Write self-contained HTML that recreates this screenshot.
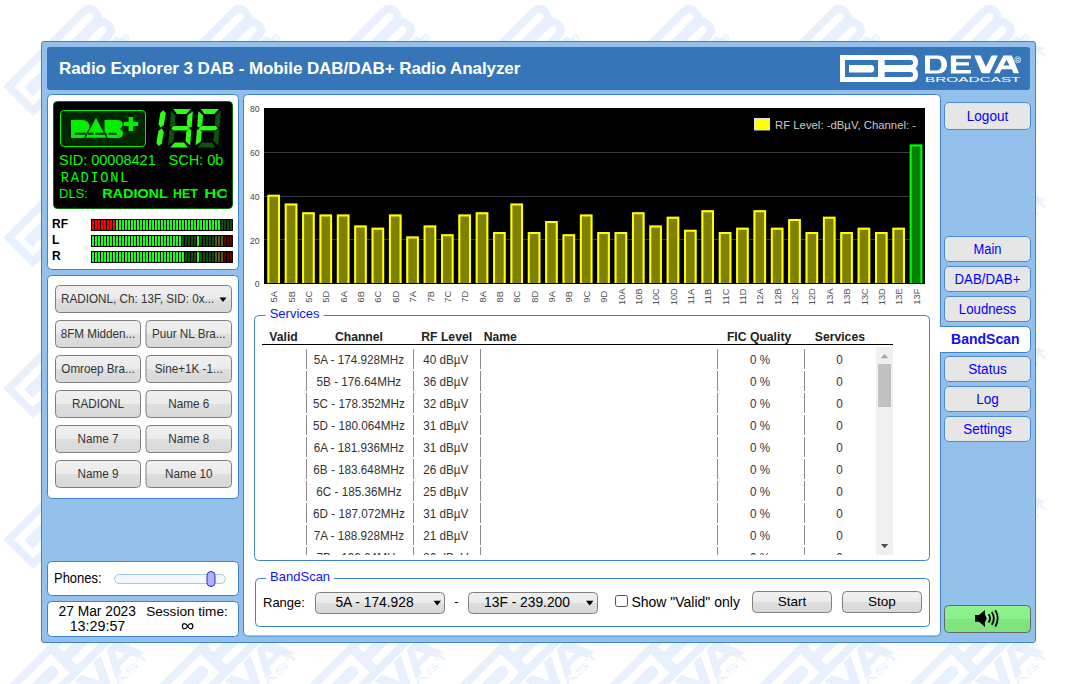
<!DOCTYPE html>
<html><head><meta charset="utf-8"><title>Radio Explorer 3 DAB</title>
<style>html,body{margin:0;padding:0;background:#fff;overflow:hidden} body{width:1077px;height:684px}</style>
</head><body>
<svg width="1077" height="684" viewBox="0 0 1077 684" style="display:block">
<defs>
<linearGradient id="gbtn" x1="0" y1="0" x2="0" y2="1">
<stop offset="0" stop-color="#f0f0f0"/><stop offset="0.5" stop-color="#ebebeb"/><stop offset="0.5" stop-color="#dedede"/><stop offset="1" stop-color="#d8d8d8"/></linearGradient>
<linearGradient id="ggreen" x1="0" y1="0" x2="0" y2="1">
<stop offset="0" stop-color="#8ef28e"/><stop offset="0.5" stop-color="#8bf08b"/><stop offset="0.5" stop-color="#80e680"/><stop offset="1" stop-color="#7ee27e"/></linearGradient>
</defs>
<rect x="0" y="0" width="1077" height="684" rx="0" fill="#ffffff" />
<defs><pattern id="wm" patternUnits="userSpaceOnUse" x="0" y="0" width="150" height="151"><g transform="translate(3.3,86.5) rotate(-45) scale(1.56) translate(-840,-55)"><path fill-rule="evenodd" fill="#e8f0fe" d="M840,55 H911 C916,55 918,58.5 918,62 C918,65 917,67.5 915.5,68.5 C917,69.5 918,72 918,75 C918,78.5 916,82 911,82 H840 Z M845,60 V77 H878 V60 Z M884.7,60 V65 H910 C912.5,65 913.2,63.8 913.2,62.5 C913.2,61.2 912.5,60 910,60 Z M884.7,71.9 V76.9 H910 C912.5,76.9 913.2,75.7 913.2,74.4 C913.2,73.1 912.5,71.9 910,71.9 Z"/><path fill="#e8f0fe" d="M849,64.9 H871 C873.5,64.9 874.2,66.8 874.2,68.75 C874.2,70.7 873.5,72.6 871,72.6 H849 Z"/></g><g transform="translate(119,51) rotate(-45) scale(1.56) translate(-1006.5,-63.7)"><g fill="#e8f0fe"><path d="M950.9,55.5 H971 V58.7 H956.2 V62.3 H969 V65.6 H956.2 V70.1 H971 V73.4 H950.9 Z"/><path d="M974.2,55.6 H980.6 L985.9,67 L991.7,55.6 H997.9 L989.5,73.2 H981.7 Z"/><path fill-rule="evenodd" d="M994,73.2 L1003.4,55.6 H1011.8 L1019,73.2 H1013.5 L1011.9,69.3 H1001.5 L999.5,73.2 Z M1003.4,65.6 L1006.5,59.8 L1009.6,65.6 Z"/></g><circle cx="1015.4000000000001" cy="60.900000000000006" r="2" fill="none" stroke="#e8f0fe" stroke-width="0.7"/><text x="1015.4000000000001" y="62.800000000000004" font-family="'Liberation Sans'" font-size="5" fill="#e8f0fe" text-anchor="middle">R</text><text x="925" y="78.0" font-family="'Liberation Sans'" font-size="6.3" fill="#e8f0fe" textLength="95.5" lengthAdjust="spacingAndGlyphs">BROADCAST</text></g></pattern></defs>
<rect x="0" y="0" width="1050" height="684" rx="0" fill="url(#wm)" />
<rect x="41.5" y="41.5" width="994" height="601" rx="2.5" fill="#93c1ec" stroke="#3d84cb" stroke-width="1" />
<rect x="47" y="47" width="983" height="43" rx="3" fill="#3676b8" />
<text x="59" y="74" font-family="'Liberation Sans', sans-serif" font-size="17" font-weight="bold" fill="#fff" text-anchor="start" letter-spacing="-0.08">Radio Explorer 3 DAB - Mobile DAB/DAB+ Radio Analyzer</text>
<path fill-rule="evenodd" fill="#fff" d="M840,55 H911 C916,55 918,58.5 918,62 C918,65 917,67.5 915.5,68.5 C917,69.5 918,72 918,75 C918,78.5 916,82 911,82 H840 Z M845,60 V77 H878 V60 Z M884.7,60 V65 H910 C912.5,65 913.2,63.8 913.2,62.5 C913.2,61.2 912.5,60 910,60 Z M884.7,71.9 V76.9 H910 C912.5,76.9 913.2,75.7 913.2,74.4 C913.2,73.1 912.5,71.9 910,71.9 Z"/><path fill="#fff" d="M849,64.9 H871 C873.5,64.9 874.2,66.8 874.2,68.75 C874.2,70.7 873.5,72.6 871,72.6 H849 Z"/>
<g fill="#fff"><path fill-rule="evenodd" d="M925,55.5 H938 C944,55.5 947,59.5 947,64.5 C947,69.5 944,73.4 938,73.4 H925 Z M930,58.7 H937 C940,58.7 941.4,61.5 941.4,64.5 C941.4,67.5 940,70.4 937,70.4 H930 Z"/><path d="M950.9,55.5 H971 V58.7 H956.2 V62.3 H969 V65.6 H956.2 V70.1 H971 V73.4 H950.9 Z"/><path d="M974.2,55.6 H980.6 L985.9,67 L991.7,55.6 H997.9 L989.5,73.2 H981.7 Z"/><path fill-rule="evenodd" d="M994,73.2 L1003.4,55.6 H1011.8 L1019,73.2 H1013.5 L1011.9,69.3 H1001.5 L999.5,73.2 Z M1003.4,65.6 L1006.5,59.8 L1009.6,65.6 Z"/></g><circle cx="1017.7" cy="59.7" r="3" fill="none" stroke="#fff" stroke-width="0.7"/><text x="1017.7" y="61.6" font-family="'Liberation Sans'" font-size="5" fill="#fff" text-anchor="middle">R</text><text x="925" y="81.5" font-family="'Liberation Sans'" font-size="6.3" fill="#fff" textLength="95.5" lengthAdjust="spacingAndGlyphs">BROADCAST</text>
<rect x="47.5" y="94.5" width="191" height="175" rx="4" fill="#fff" stroke="#3d84cb" stroke-width="1" />
<rect x="53.5" y="101.5" width="179" height="107" rx="4" fill="#000" stroke="#0b6b0b" stroke-width="1" />
<rect x="60.5" y="110.5" width="85" height="36" rx="3.5" fill="#002800" stroke="#00f000" stroke-width="1" />
<g fill="#00f000">
<path d="M71,120 H82 Q90,120 90,129 Q90,138 82,138 H71 Z"/>
<path d="M104.5,120 H117 Q122.5,120 122.5,124.3 Q122.5,127.8 120,129 Q123,130.3 123,133.5 Q123,138 117,138 H104.5 Z"/>
<path d="M96,116.5 L107.5,138.5 H84.5 Z" stroke="#002800" stroke-width="1.3"/>
<rect x="128.6" y="117" width="4.6" height="14"/><rect x="124" y="121.8" width="14.2" height="4.2"/>
</g>
<g fill="#002800"><rect x="74.7" y="132.7" width="11.5" height="2"/><rect x="88" y="132.7" width="5.5" height="2"/><rect x="95.5" y="132.7" width="11" height="2"/><rect x="108.5" y="132.7" width="8.5" height="2"/></g>
<polygon points="163.60,110.20 160.48,112.40 158.40,124.28 160.60,127.40 163.72,125.20 165.80,113.32" fill="#2cff14"/>
<polygon points="161.60,128.60 158.48,130.80 156.40,142.88 158.60,146.00 161.72,143.80 163.80,131.72" fill="#2cff14"/>
<polygon points="173.28,109.00 190.88,109.00 186.38,114.00 176.98,114.00" fill="#2cff14"/>
<polygon points="170.90,111.20 175.58,115.30 174.81,124.85 172.10,127.55 169.67,126.65" fill="#0d520d"/>
<polygon points="192.90,111.20 191.67,126.65 189.10,127.55 186.81,124.85 187.58,115.30" fill="#2cff14"/>
<polygon points="171.14,128.25 173.82,125.95 187.62,125.95 189.94,128.25 187.26,130.55 173.46,130.55" fill="#2cff14"/>
<polygon points="168.18,145.30 173.50,141.20 174.27,131.65 171.98,128.95 169.41,129.85" fill="#0d520d"/>
<polygon points="190.18,145.30 191.41,129.85 188.98,128.95 186.27,131.65 185.50,141.20" fill="#2cff14"/>
<polygon points="174.70,142.50 184.10,142.50 187.80,147.50 170.20,147.50" fill="#2cff14"/>
<polygon points="200.78,109.00 218.88,109.00 214.38,114.00 204.48,114.00" fill="#2cff14"/>
<polygon points="198.40,111.20 203.08,115.30 202.31,124.85 199.60,127.55 197.17,126.65" fill="#2cff14"/>
<polygon points="220.90,111.20 219.67,126.65 217.10,127.55 214.81,124.85 215.58,115.30" fill="#0d520d"/>
<polygon points="198.64,128.25 201.32,125.95 215.62,125.95 217.94,128.25 215.26,130.55 200.96,130.55" fill="#2cff14"/>
<polygon points="195.68,145.30 201.00,141.20 201.77,131.65 199.48,128.95 196.91,129.85" fill="#2cff14"/>
<polygon points="218.18,145.30 219.41,129.85 216.98,128.95 214.27,131.65 213.50,141.20" fill="#0d520d"/>
<polygon points="202.20,142.50 212.10,142.50 215.80,147.50 197.70,147.50" fill="#0d520d"/>
<text x="59" y="164.6" font-family="'Liberation Sans', sans-serif" font-size="14.5" font-weight="normal" fill="#00ff00" text-anchor="start" >SID: 00008421</text>
<text x="168.5" y="164.6" font-family="'Liberation Sans', sans-serif" font-size="14.5" font-weight="normal" fill="#00ff00" text-anchor="start" >SCH: 0b</text>
<text x="60.8" y="181.9" font-family="'Liberation Mono', monospace" font-size="13.8" font-weight="normal" fill="#00ff00" text-anchor="start" textLength="67.5" lengthAdjust="spacing">RADIONL</text>
<text x="59" y="197.7" font-family="'Liberation Sans', sans-serif" font-size="13" font-weight="normal" fill="#00ff00" text-anchor="start" >DLS:</text>
<clipPath id="dlsclip"><rect x="100" y="180" width="126.5" height="25"/></clipPath>
<g clip-path="url(#dlsclip)">
<text x="102.2" y="197.7" font-family="'Liberation Sans', sans-serif" font-size="13.5" font-weight="bold" fill="#00ff00" text-anchor="start" textLength="65.6" lengthAdjust="spacingAndGlyphs">RADIONL</text>
<text x="173" y="197.7" font-family="'Liberation Sans', sans-serif" font-size="13.5" font-weight="bold" fill="#00ff00" text-anchor="start" textLength="24.7" lengthAdjust="spacingAndGlyphs">HET</text>
<text x="204.2" y="197.7" font-family="'Liberation Sans', sans-serif" font-size="13.5" font-weight="bold" fill="#00ff00" text-anchor="start" textLength="35" lengthAdjust="spacingAndGlyphs">HOT</text>
</g>
<text x="52" y="228.3" font-family="'Liberation Sans', sans-serif" font-size="12" font-weight="bold" fill="#000" text-anchor="start" >RF</text>
<text x="52" y="244" font-family="'Liberation Sans', sans-serif" font-size="12" font-weight="bold" fill="#000" text-anchor="start" >L</text>
<text x="52" y="260" font-family="'Liberation Sans', sans-serif" font-size="12" font-weight="bold" fill="#000" text-anchor="start" >R</text>
<rect x="91" y="219" width="142" height="12" rx="0" fill="#000" />
<rect x="92" y="220" width="2" height="10" rx="0" fill="#ff0000" />
<rect x="95" y="220" width="2" height="10" rx="0" fill="#ff0000" />
<rect x="98" y="220" width="2" height="10" rx="0" fill="#ff0000" />
<rect x="101" y="220" width="2" height="10" rx="0" fill="#ff0000" />
<rect x="104" y="220" width="2" height="10" rx="0" fill="#ff0000" />
<rect x="107" y="220" width="2" height="10" rx="0" fill="#ff0000" />
<rect x="110" y="220" width="2" height="10" rx="0" fill="#ff0000" />
<rect x="113" y="220" width="2" height="10" rx="0" fill="#ff0000" />
<rect x="116" y="220" width="2" height="10" rx="0" fill="#1aff1a" />
<rect x="119" y="220" width="2" height="10" rx="0" fill="#1aff1a" />
<rect x="122" y="220" width="2" height="10" rx="0" fill="#1aff1a" />
<rect x="125" y="220" width="2" height="10" rx="0" fill="#1aff1a" />
<rect x="128" y="220" width="2" height="10" rx="0" fill="#1aff1a" />
<rect x="131" y="220" width="2" height="10" rx="0" fill="#1aff1a" />
<rect x="134" y="220" width="2" height="10" rx="0" fill="#1aff1a" />
<rect x="137" y="220" width="2" height="10" rx="0" fill="#1aff1a" />
<rect x="140" y="220" width="2" height="10" rx="0" fill="#1aff1a" />
<rect x="143" y="220" width="2" height="10" rx="0" fill="#1aff1a" />
<rect x="146" y="220" width="2" height="10" rx="0" fill="#1aff1a" />
<rect x="149" y="220" width="2" height="10" rx="0" fill="#1aff1a" />
<rect x="152" y="220" width="2" height="10" rx="0" fill="#1aff1a" />
<rect x="155" y="220" width="2" height="10" rx="0" fill="#1aff1a" />
<rect x="158" y="220" width="2" height="10" rx="0" fill="#1aff1a" />
<rect x="161" y="220" width="2" height="10" rx="0" fill="#1aff1a" />
<rect x="164" y="220" width="2" height="10" rx="0" fill="#1aff1a" />
<rect x="167" y="220" width="2" height="10" rx="0" fill="#1aff1a" />
<rect x="170" y="220" width="2" height="10" rx="0" fill="#1aff1a" />
<rect x="173" y="220" width="2" height="10" rx="0" fill="#1aff1a" />
<rect x="176" y="220" width="2" height="10" rx="0" fill="#1aff1a" />
<rect x="179" y="220" width="2" height="10" rx="0" fill="#1aff1a" />
<rect x="182" y="220" width="2" height="10" rx="0" fill="#1aff1a" />
<rect x="185" y="220" width="2" height="10" rx="0" fill="#1aff1a" />
<rect x="188" y="220" width="2" height="10" rx="0" fill="#1aff1a" />
<rect x="191" y="220" width="2" height="10" rx="0" fill="#1aff1a" />
<rect x="194" y="220" width="2" height="10" rx="0" fill="#1aff1a" />
<rect x="197" y="220" width="2" height="10" rx="0" fill="#1aff1a" />
<rect x="200" y="220" width="2" height="10" rx="0" fill="#1aff1a" />
<rect x="203" y="220" width="2" height="10" rx="0" fill="#1aff1a" />
<rect x="206" y="220" width="2" height="10" rx="0" fill="#1aff1a" />
<rect x="209" y="220" width="2" height="10" rx="0" fill="#1aff1a" />
<rect x="212" y="220" width="2" height="10" rx="0" fill="#1aff1a" />
<rect x="215" y="220" width="2" height="10" rx="0" fill="#1aff1a" />
<rect x="218" y="220" width="2" height="10" rx="0" fill="#1aff1a" />
<rect x="221" y="220" width="2" height="10" rx="0" fill="#0d4a0d" />
<rect x="224" y="220" width="2" height="10" rx="0" fill="#0d4a0d" />
<rect x="227" y="220" width="2" height="10" rx="0" fill="#0d4a0d" />
<rect x="230" y="220" width="2" height="10" rx="0" fill="#0d4a0d" />
<rect x="91" y="235" width="142" height="12" rx="0" fill="#000" />
<rect x="92" y="236" width="2" height="10" rx="0" fill="#1aff1a" />
<rect x="95" y="236" width="2" height="10" rx="0" fill="#1aff1a" />
<rect x="98" y="236" width="2" height="10" rx="0" fill="#1aff1a" />
<rect x="101" y="236" width="2" height="10" rx="0" fill="#1aff1a" />
<rect x="104" y="236" width="2" height="10" rx="0" fill="#1aff1a" />
<rect x="107" y="236" width="2" height="10" rx="0" fill="#1aff1a" />
<rect x="110" y="236" width="2" height="10" rx="0" fill="#1aff1a" />
<rect x="113" y="236" width="2" height="10" rx="0" fill="#1aff1a" />
<rect x="116" y="236" width="2" height="10" rx="0" fill="#1aff1a" />
<rect x="119" y="236" width="2" height="10" rx="0" fill="#1aff1a" />
<rect x="122" y="236" width="2" height="10" rx="0" fill="#1aff1a" />
<rect x="125" y="236" width="2" height="10" rx="0" fill="#1aff1a" />
<rect x="128" y="236" width="2" height="10" rx="0" fill="#1aff1a" />
<rect x="131" y="236" width="2" height="10" rx="0" fill="#1aff1a" />
<rect x="134" y="236" width="2" height="10" rx="0" fill="#1aff1a" />
<rect x="137" y="236" width="2" height="10" rx="0" fill="#1aff1a" />
<rect x="140" y="236" width="2" height="10" rx="0" fill="#1aff1a" />
<rect x="143" y="236" width="2" height="10" rx="0" fill="#1aff1a" />
<rect x="146" y="236" width="2" height="10" rx="0" fill="#1aff1a" />
<rect x="149" y="236" width="2" height="10" rx="0" fill="#1aff1a" />
<rect x="152" y="236" width="2" height="10" rx="0" fill="#1aff1a" />
<rect x="155" y="236" width="2" height="10" rx="0" fill="#1aff1a" />
<rect x="158" y="236" width="2" height="10" rx="0" fill="#1aff1a" />
<rect x="161" y="236" width="2" height="10" rx="0" fill="#1aff1a" />
<rect x="164" y="236" width="2" height="10" rx="0" fill="#1aff1a" />
<rect x="167" y="236" width="2" height="10" rx="0" fill="#1aff1a" />
<rect x="170" y="236" width="2" height="10" rx="0" fill="#1aff1a" />
<rect x="173" y="236" width="2" height="10" rx="0" fill="#1aff1a" />
<rect x="176" y="236" width="2" height="10" rx="0" fill="#1aff1a" />
<rect x="179" y="236" width="2" height="10" rx="0" fill="#1aff1a" />
<rect x="182" y="236" width="2" height="10" rx="0" fill="#0d4a0d" />
<rect x="185" y="236" width="2" height="10" rx="0" fill="#0d4a0d" />
<rect x="188" y="236" width="2" height="10" rx="0" fill="#0d4a0d" />
<rect x="191" y="236" width="2" height="10" rx="0" fill="#0d4a0d" />
<rect x="194" y="236" width="2" height="10" rx="0" fill="#0d4a0d" />
<rect x="197" y="236" width="2" height="10" rx="0" fill="#1aff1a" />
<rect x="200" y="236" width="2" height="10" rx="0" fill="#0d4a0d" />
<rect x="203" y="236" width="2" height="10" rx="0" fill="#0d4a0d" />
<rect x="206" y="236" width="2" height="10" rx="0" fill="#0d4a0d" />
<rect x="209" y="236" width="2" height="10" rx="0" fill="#0d4a0d" />
<rect x="212" y="236" width="2" height="10" rx="0" fill="#0d4a0d" />
<rect x="215" y="236" width="2" height="10" rx="0" fill="#5a5a00" />
<rect x="218" y="236" width="2" height="10" rx="0" fill="#5a5a00" />
<rect x="221" y="236" width="2" height="10" rx="0" fill="#5a5a00" />
<rect x="224" y="236" width="2" height="10" rx="0" fill="#5a0000" />
<rect x="227" y="236" width="2" height="10" rx="0" fill="#5a0000" />
<rect x="230" y="236" width="2" height="10" rx="0" fill="#5a0000" />
<rect x="91" y="251" width="142" height="12" rx="0" fill="#000" />
<rect x="92" y="252" width="2" height="10" rx="0" fill="#1aff1a" />
<rect x="95" y="252" width="2" height="10" rx="0" fill="#1aff1a" />
<rect x="98" y="252" width="2" height="10" rx="0" fill="#1aff1a" />
<rect x="101" y="252" width="2" height="10" rx="0" fill="#1aff1a" />
<rect x="104" y="252" width="2" height="10" rx="0" fill="#1aff1a" />
<rect x="107" y="252" width="2" height="10" rx="0" fill="#1aff1a" />
<rect x="110" y="252" width="2" height="10" rx="0" fill="#1aff1a" />
<rect x="113" y="252" width="2" height="10" rx="0" fill="#1aff1a" />
<rect x="116" y="252" width="2" height="10" rx="0" fill="#1aff1a" />
<rect x="119" y="252" width="2" height="10" rx="0" fill="#1aff1a" />
<rect x="122" y="252" width="2" height="10" rx="0" fill="#1aff1a" />
<rect x="125" y="252" width="2" height="10" rx="0" fill="#1aff1a" />
<rect x="128" y="252" width="2" height="10" rx="0" fill="#1aff1a" />
<rect x="131" y="252" width="2" height="10" rx="0" fill="#1aff1a" />
<rect x="134" y="252" width="2" height="10" rx="0" fill="#1aff1a" />
<rect x="137" y="252" width="2" height="10" rx="0" fill="#1aff1a" />
<rect x="140" y="252" width="2" height="10" rx="0" fill="#1aff1a" />
<rect x="143" y="252" width="2" height="10" rx="0" fill="#1aff1a" />
<rect x="146" y="252" width="2" height="10" rx="0" fill="#1aff1a" />
<rect x="149" y="252" width="2" height="10" rx="0" fill="#1aff1a" />
<rect x="152" y="252" width="2" height="10" rx="0" fill="#1aff1a" />
<rect x="155" y="252" width="2" height="10" rx="0" fill="#1aff1a" />
<rect x="158" y="252" width="2" height="10" rx="0" fill="#1aff1a" />
<rect x="161" y="252" width="2" height="10" rx="0" fill="#1aff1a" />
<rect x="164" y="252" width="2" height="10" rx="0" fill="#1aff1a" />
<rect x="167" y="252" width="2" height="10" rx="0" fill="#1aff1a" />
<rect x="170" y="252" width="2" height="10" rx="0" fill="#1aff1a" />
<rect x="173" y="252" width="2" height="10" rx="0" fill="#1aff1a" />
<rect x="176" y="252" width="2" height="10" rx="0" fill="#1aff1a" />
<rect x="179" y="252" width="2" height="10" rx="0" fill="#1aff1a" />
<rect x="182" y="252" width="2" height="10" rx="0" fill="#1aff1a" />
<rect x="185" y="252" width="2" height="10" rx="0" fill="#0d4a0d" />
<rect x="188" y="252" width="2" height="10" rx="0" fill="#0d4a0d" />
<rect x="191" y="252" width="2" height="10" rx="0" fill="#0d4a0d" />
<rect x="194" y="252" width="2" height="10" rx="0" fill="#0d4a0d" />
<rect x="197" y="252" width="2" height="10" rx="0" fill="#1aff1a" />
<rect x="200" y="252" width="2" height="10" rx="0" fill="#0d4a0d" />
<rect x="203" y="252" width="2" height="10" rx="0" fill="#0d4a0d" />
<rect x="206" y="252" width="2" height="10" rx="0" fill="#0d4a0d" />
<rect x="209" y="252" width="2" height="10" rx="0" fill="#0d4a0d" />
<rect x="212" y="252" width="2" height="10" rx="0" fill="#0d4a0d" />
<rect x="215" y="252" width="2" height="10" rx="0" fill="#5a5a00" />
<rect x="218" y="252" width="2" height="10" rx="0" fill="#5a5a00" />
<rect x="221" y="252" width="2" height="10" rx="0" fill="#5a5a00" />
<rect x="224" y="252" width="2" height="10" rx="0" fill="#5a0000" />
<rect x="227" y="252" width="2" height="10" rx="0" fill="#5a0000" />
<rect x="230" y="252" width="2" height="10" rx="0" fill="#5a0000" />
<rect x="47.5" y="275.5" width="191" height="223" rx="4" fill="#fff" stroke="#3d84cb" stroke-width="1" />
<rect x="55.5" y="285.5" width="176" height="27" rx="4" fill="url(#gbtn)" stroke="#7f7f7f" stroke-width="1" />
<text x="0" y="0" transform="translate(61,303.3) scale(0.9212598425196851,1)" font-family="'Liberation Sans', sans-serif" font-size="12.7" font-weight="normal" fill="#333" text-anchor="start">RADIONL, Ch: 13F, SID: 0x...</text>
<path d="M219.5,297.5 H226.5 L223,302.0 Z" fill="#000"/>
<rect x="55.5" y="320.5" width="85" height="27" rx="4" fill="url(#gbtn)" stroke="#7f7f7f" stroke-width="1" />
<text x="0" y="0" transform="translate(98.0,338.3) scale(0.9212598425196851,1)" font-family="'Liberation Sans', sans-serif" font-size="12.7" font-weight="normal" fill="#333" text-anchor="middle">8FM Midden...</text>
<rect x="146.0" y="320.5" width="85.5" height="27" rx="4" fill="url(#gbtn)" stroke="#7f7f7f" stroke-width="1" />
<text x="0" y="0" transform="translate(188.75,338.3) scale(0.9212598425196851,1)" font-family="'Liberation Sans', sans-serif" font-size="12.7" font-weight="normal" fill="#333" text-anchor="middle">Puur NL Bra...</text>
<rect x="55.5" y="355.5" width="85" height="27" rx="4" fill="url(#gbtn)" stroke="#7f7f7f" stroke-width="1" />
<text x="0" y="0" transform="translate(98.0,373.3) scale(0.9212598425196851,1)" font-family="'Liberation Sans', sans-serif" font-size="12.7" font-weight="normal" fill="#333" text-anchor="middle">Omroep Bra...</text>
<rect x="146.0" y="355.5" width="85.5" height="27" rx="4" fill="url(#gbtn)" stroke="#7f7f7f" stroke-width="1" />
<text x="0" y="0" transform="translate(188.75,373.3) scale(0.9212598425196851,1)" font-family="'Liberation Sans', sans-serif" font-size="12.7" font-weight="normal" fill="#333" text-anchor="middle">Sine+1K -1...</text>
<rect x="55.5" y="390.5" width="85" height="27" rx="4" fill="url(#gbtn)" stroke="#7f7f7f" stroke-width="1" />
<text x="0" y="0" transform="translate(98.0,408.3) scale(0.9212598425196851,1)" font-family="'Liberation Sans', sans-serif" font-size="12.7" font-weight="normal" fill="#333" text-anchor="middle">RADIONL</text>
<rect x="146.0" y="390.5" width="85.5" height="27" rx="4" fill="url(#gbtn)" stroke="#7f7f7f" stroke-width="1" />
<text x="0" y="0" transform="translate(188.75,408.3) scale(0.9212598425196851,1)" font-family="'Liberation Sans', sans-serif" font-size="12.7" font-weight="normal" fill="#333" text-anchor="middle">Name 6</text>
<rect x="55.5" y="425.5" width="85" height="27" rx="4" fill="url(#gbtn)" stroke="#7f7f7f" stroke-width="1" />
<text x="0" y="0" transform="translate(98.0,443.3) scale(0.9212598425196851,1)" font-family="'Liberation Sans', sans-serif" font-size="12.7" font-weight="normal" fill="#333" text-anchor="middle">Name 7</text>
<rect x="146.0" y="425.5" width="85.5" height="27" rx="4" fill="url(#gbtn)" stroke="#7f7f7f" stroke-width="1" />
<text x="0" y="0" transform="translate(188.75,443.3) scale(0.9212598425196851,1)" font-family="'Liberation Sans', sans-serif" font-size="12.7" font-weight="normal" fill="#333" text-anchor="middle">Name 8</text>
<rect x="55.5" y="460.5" width="85" height="27" rx="4" fill="url(#gbtn)" stroke="#7f7f7f" stroke-width="1" />
<text x="0" y="0" transform="translate(98.0,478.3) scale(0.9212598425196851,1)" font-family="'Liberation Sans', sans-serif" font-size="12.7" font-weight="normal" fill="#333" text-anchor="middle">Name 9</text>
<rect x="146.0" y="460.5" width="85.5" height="27" rx="4" fill="url(#gbtn)" stroke="#7f7f7f" stroke-width="1" />
<text x="0" y="0" transform="translate(188.75,478.3) scale(0.9212598425196851,1)" font-family="'Liberation Sans', sans-serif" font-size="12.7" font-weight="normal" fill="#333" text-anchor="middle">Name 10</text>
<rect x="47.5" y="561.5" width="191" height="34" rx="4" fill="#fff" stroke="#3d84cb" stroke-width="1" />
<text x="0" y="0" transform="translate(54,583) scale(0.915,1)" font-family="'Liberation Sans', sans-serif" font-size="14.2" font-weight="normal" fill="#000" text-anchor="start">Phones:</text>
<rect x="114.5" y="574.5" width="111" height="9" rx="4.5" fill="#f4f8fc" stroke="#a9c8e6" stroke-width="1" />
<rect x="207" y="571.5" width="8" height="15" rx="4" fill="#b0b0ff" stroke="#2828e0" stroke-width="1" />
<rect x="47.5" y="601.5" width="191" height="35" rx="4" fill="#fff" stroke="#3d84cb" stroke-width="1" />
<text x="97.2" y="616" font-family="'Liberation Sans', sans-serif" font-size="13.8" font-weight="normal" fill="#000" text-anchor="middle" >27 Mar 2023</text>
<text x="97.5" y="631" font-family="'Liberation Sans', sans-serif" font-size="14.3" font-weight="normal" fill="#000" text-anchor="middle" >13:29:57</text>
<text x="187" y="615.5" font-family="'Liberation Sans', sans-serif" font-size="13.6" font-weight="normal" fill="#000" text-anchor="middle" >Session time:</text>
<path d="M187.6,626.2 C185.6,622.9 182.4,622.7 182.4,626.2 C182.4,629.7 185.6,629.5 187.6,626.2 C189.6,622.9 192.8,622.7 192.8,626.2 C192.8,629.7 189.6,629.5 187.6,626.2 Z" fill="none" stroke="#000" stroke-width="1.25"/>
<rect x="243.5" y="94.5" width="697" height="541.5" rx="4" fill="#fff" stroke="#3d84cb" stroke-width="1" />
<rect x="264" y="108" width="661" height="176" rx="0" fill="#000" />
<rect x="264" y="239" width="659" height="1" rx="0" fill="#3a3a3a" />
<rect x="264" y="196" width="659" height="1" rx="0" fill="#3a3a3a" />
<rect x="264" y="152" width="659" height="1" rx="0" fill="#3a3a3a" />
<text x="259.5" y="287.3" font-family="'Liberation Sans', sans-serif" font-size="9.5" font-weight="normal" fill="#444" text-anchor="end" textLength="4.8" lengthAdjust="spacingAndGlyphs">0</text>
<text x="259.5" y="243.49999999999997" font-family="'Liberation Sans', sans-serif" font-size="9.5" font-weight="normal" fill="#444" text-anchor="end" textLength="9.6" lengthAdjust="spacingAndGlyphs">20</text>
<text x="259.5" y="199.7" font-family="'Liberation Sans', sans-serif" font-size="9.5" font-weight="normal" fill="#444" text-anchor="end" textLength="9.6" lengthAdjust="spacingAndGlyphs">40</text>
<text x="259.5" y="155.89999999999998" font-family="'Liberation Sans', sans-serif" font-size="9.5" font-weight="normal" fill="#444" text-anchor="end" textLength="9.6" lengthAdjust="spacingAndGlyphs">60</text>
<text x="259.5" y="112.1" font-family="'Liberation Sans', sans-serif" font-size="9.5" font-weight="normal" fill="#444" text-anchor="end" textLength="9.6" lengthAdjust="spacingAndGlyphs">80</text>
<rect x="267.40" y="194.80" width="12.6" height="88.20" fill="#808000"/>
<path d="M268.40,283 V195.80 H279.00 V283" fill="none" stroke="#ffff00" stroke-width="2"/>
<text x="0" y="0" transform="translate(277.30,296.7) rotate(-90)" font-family="'Liberation Sans', sans-serif" font-size="9.3" fill="#505050" text-anchor="middle">5A</text>
<rect x="284.76" y="203.56" width="12.6" height="79.44" fill="#808000"/>
<path d="M285.76,283 V204.56 H296.36 V283" fill="none" stroke="#ffff00" stroke-width="2"/>
<text x="0" y="0" transform="translate(294.66,296.7) rotate(-90)" font-family="'Liberation Sans', sans-serif" font-size="9.3" fill="#505050" text-anchor="middle">5B</text>
<rect x="302.12" y="212.32" width="12.6" height="70.68" fill="#808000"/>
<path d="M303.12,283 V213.32 H313.72 V283" fill="none" stroke="#ffff00" stroke-width="2"/>
<text x="0" y="0" transform="translate(312.02,296.7) rotate(-90)" font-family="'Liberation Sans', sans-serif" font-size="9.3" fill="#505050" text-anchor="middle">5C</text>
<rect x="319.48" y="214.51" width="12.6" height="68.49" fill="#808000"/>
<path d="M320.48,283 V215.51 H331.08 V283" fill="none" stroke="#ffff00" stroke-width="2"/>
<text x="0" y="0" transform="translate(329.38,296.7) rotate(-90)" font-family="'Liberation Sans', sans-serif" font-size="9.3" fill="#505050" text-anchor="middle">5D</text>
<rect x="336.84" y="214.51" width="12.6" height="68.49" fill="#808000"/>
<path d="M337.84,283 V215.51 H348.44 V283" fill="none" stroke="#ffff00" stroke-width="2"/>
<text x="0" y="0" transform="translate(346.74,296.7) rotate(-90)" font-family="'Liberation Sans', sans-serif" font-size="9.3" fill="#505050" text-anchor="middle">6A</text>
<rect x="354.20" y="225.46" width="12.6" height="57.54" fill="#808000"/>
<path d="M355.20,283 V226.46 H365.80 V283" fill="none" stroke="#ffff00" stroke-width="2"/>
<text x="0" y="0" transform="translate(364.10,296.7) rotate(-90)" font-family="'Liberation Sans', sans-serif" font-size="9.3" fill="#505050" text-anchor="middle">6B</text>
<rect x="371.56" y="227.65" width="12.6" height="55.35" fill="#808000"/>
<path d="M372.56,283 V228.65 H383.16 V283" fill="none" stroke="#ffff00" stroke-width="2"/>
<text x="0" y="0" transform="translate(381.46,296.7) rotate(-90)" font-family="'Liberation Sans', sans-serif" font-size="9.3" fill="#505050" text-anchor="middle">6C</text>
<rect x="388.92" y="214.51" width="12.6" height="68.49" fill="#808000"/>
<path d="M389.92,283 V215.51 H400.52 V283" fill="none" stroke="#ffff00" stroke-width="2"/>
<text x="0" y="0" transform="translate(398.82,296.7) rotate(-90)" font-family="'Liberation Sans', sans-serif" font-size="9.3" fill="#505050" text-anchor="middle">6D</text>
<rect x="406.28" y="236.41" width="12.6" height="46.59" fill="#808000"/>
<path d="M407.28,283 V237.41 H417.88 V283" fill="none" stroke="#ffff00" stroke-width="2"/>
<text x="0" y="0" transform="translate(416.18,296.7) rotate(-90)" font-family="'Liberation Sans', sans-serif" font-size="9.3" fill="#505050" text-anchor="middle">7A</text>
<rect x="423.64" y="225.46" width="12.6" height="57.54" fill="#808000"/>
<path d="M424.64,283 V226.46 H435.24 V283" fill="none" stroke="#ffff00" stroke-width="2"/>
<text x="0" y="0" transform="translate(433.54,296.7) rotate(-90)" font-family="'Liberation Sans', sans-serif" font-size="9.3" fill="#505050" text-anchor="middle">7B</text>
<rect x="441.00" y="234.22" width="12.6" height="48.78" fill="#808000"/>
<path d="M442.00,283 V235.22 H452.60 V283" fill="none" stroke="#ffff00" stroke-width="2"/>
<text x="0" y="0" transform="translate(450.90,296.7) rotate(-90)" font-family="'Liberation Sans', sans-serif" font-size="9.3" fill="#505050" text-anchor="middle">7C</text>
<rect x="458.36" y="214.51" width="12.6" height="68.49" fill="#808000"/>
<path d="M459.36,283 V215.51 H469.96 V283" fill="none" stroke="#ffff00" stroke-width="2"/>
<text x="0" y="0" transform="translate(468.26,296.7) rotate(-90)" font-family="'Liberation Sans', sans-serif" font-size="9.3" fill="#505050" text-anchor="middle">7D</text>
<rect x="475.72" y="212.32" width="12.6" height="70.68" fill="#808000"/>
<path d="M476.72,283 V213.32 H487.32 V283" fill="none" stroke="#ffff00" stroke-width="2"/>
<text x="0" y="0" transform="translate(485.62,296.7) rotate(-90)" font-family="'Liberation Sans', sans-serif" font-size="9.3" fill="#505050" text-anchor="middle">8A</text>
<rect x="493.08" y="232.03" width="12.6" height="50.97" fill="#808000"/>
<path d="M494.08,283 V233.03 H504.68 V283" fill="none" stroke="#ffff00" stroke-width="2"/>
<text x="0" y="0" transform="translate(502.98,296.7) rotate(-90)" font-family="'Liberation Sans', sans-serif" font-size="9.3" fill="#505050" text-anchor="middle">8B</text>
<rect x="510.44" y="203.56" width="12.6" height="79.44" fill="#808000"/>
<path d="M511.44,283 V204.56 H522.04 V283" fill="none" stroke="#ffff00" stroke-width="2"/>
<text x="0" y="0" transform="translate(520.34,296.7) rotate(-90)" font-family="'Liberation Sans', sans-serif" font-size="9.3" fill="#505050" text-anchor="middle">8C</text>
<rect x="527.80" y="232.03" width="12.6" height="50.97" fill="#808000"/>
<path d="M528.80,283 V233.03 H539.40 V283" fill="none" stroke="#ffff00" stroke-width="2"/>
<text x="0" y="0" transform="translate(537.70,296.7) rotate(-90)" font-family="'Liberation Sans', sans-serif" font-size="9.3" fill="#505050" text-anchor="middle">8D</text>
<rect x="545.16" y="221.08" width="12.6" height="61.92" fill="#808000"/>
<path d="M546.16,283 V222.08 H556.76 V283" fill="none" stroke="#ffff00" stroke-width="2"/>
<text x="0" y="0" transform="translate(555.06,296.7) rotate(-90)" font-family="'Liberation Sans', sans-serif" font-size="9.3" fill="#505050" text-anchor="middle">9A</text>
<rect x="562.52" y="234.22" width="12.6" height="48.78" fill="#808000"/>
<path d="M563.52,283 V235.22 H574.12 V283" fill="none" stroke="#ffff00" stroke-width="2"/>
<text x="0" y="0" transform="translate(572.42,296.7) rotate(-90)" font-family="'Liberation Sans', sans-serif" font-size="9.3" fill="#505050" text-anchor="middle">9B</text>
<rect x="579.88" y="214.51" width="12.6" height="68.49" fill="#808000"/>
<path d="M580.88,283 V215.51 H591.48 V283" fill="none" stroke="#ffff00" stroke-width="2"/>
<text x="0" y="0" transform="translate(589.78,296.7) rotate(-90)" font-family="'Liberation Sans', sans-serif" font-size="9.3" fill="#505050" text-anchor="middle">9C</text>
<rect x="597.24" y="232.03" width="12.6" height="50.97" fill="#808000"/>
<path d="M598.24,283 V233.03 H608.84 V283" fill="none" stroke="#ffff00" stroke-width="2"/>
<text x="0" y="0" transform="translate(607.14,296.7) rotate(-90)" font-family="'Liberation Sans', sans-serif" font-size="9.3" fill="#505050" text-anchor="middle">9D</text>
<rect x="614.60" y="232.03" width="12.6" height="50.97" fill="#808000"/>
<path d="M615.60,283 V233.03 H626.20 V283" fill="none" stroke="#ffff00" stroke-width="2"/>
<text x="0" y="0" transform="translate(624.50,296.7) rotate(-90)" font-family="'Liberation Sans', sans-serif" font-size="9.3" fill="#505050" text-anchor="middle">10A</text>
<rect x="631.96" y="212.32" width="12.6" height="70.68" fill="#808000"/>
<path d="M632.96,283 V213.32 H643.56 V283" fill="none" stroke="#ffff00" stroke-width="2"/>
<text x="0" y="0" transform="translate(641.86,296.7) rotate(-90)" font-family="'Liberation Sans', sans-serif" font-size="9.3" fill="#505050" text-anchor="middle">10B</text>
<rect x="649.32" y="225.46" width="12.6" height="57.54" fill="#808000"/>
<path d="M650.32,283 V226.46 H660.92 V283" fill="none" stroke="#ffff00" stroke-width="2"/>
<text x="0" y="0" transform="translate(659.22,296.7) rotate(-90)" font-family="'Liberation Sans', sans-serif" font-size="9.3" fill="#505050" text-anchor="middle">10C</text>
<rect x="666.68" y="216.70" width="12.6" height="66.30" fill="#808000"/>
<path d="M667.68,283 V217.70 H678.28 V283" fill="none" stroke="#ffff00" stroke-width="2"/>
<text x="0" y="0" transform="translate(676.58,296.7) rotate(-90)" font-family="'Liberation Sans', sans-serif" font-size="9.3" fill="#505050" text-anchor="middle">10D</text>
<rect x="684.04" y="229.84" width="12.6" height="53.16" fill="#808000"/>
<path d="M685.04,283 V230.84 H695.64 V283" fill="none" stroke="#ffff00" stroke-width="2"/>
<text x="0" y="0" transform="translate(693.94,296.7) rotate(-90)" font-family="'Liberation Sans', sans-serif" font-size="9.3" fill="#505050" text-anchor="middle">11A</text>
<rect x="701.40" y="210.13" width="12.6" height="72.87" fill="#808000"/>
<path d="M702.40,283 V211.13 H713.00 V283" fill="none" stroke="#ffff00" stroke-width="2"/>
<text x="0" y="0" transform="translate(711.30,296.7) rotate(-90)" font-family="'Liberation Sans', sans-serif" font-size="9.3" fill="#505050" text-anchor="middle">11B</text>
<rect x="718.76" y="232.03" width="12.6" height="50.97" fill="#808000"/>
<path d="M719.76,283 V233.03 H730.36 V283" fill="none" stroke="#ffff00" stroke-width="2"/>
<text x="0" y="0" transform="translate(728.66,296.7) rotate(-90)" font-family="'Liberation Sans', sans-serif" font-size="9.3" fill="#505050" text-anchor="middle">11C</text>
<rect x="736.12" y="227.65" width="12.6" height="55.35" fill="#808000"/>
<path d="M737.12,283 V228.65 H747.72 V283" fill="none" stroke="#ffff00" stroke-width="2"/>
<text x="0" y="0" transform="translate(746.02,296.7) rotate(-90)" font-family="'Liberation Sans', sans-serif" font-size="9.3" fill="#505050" text-anchor="middle">11D</text>
<rect x="753.48" y="210.13" width="12.6" height="72.87" fill="#808000"/>
<path d="M754.48,283 V211.13 H765.08 V283" fill="none" stroke="#ffff00" stroke-width="2"/>
<text x="0" y="0" transform="translate(763.38,296.7) rotate(-90)" font-family="'Liberation Sans', sans-serif" font-size="9.3" fill="#505050" text-anchor="middle">12A</text>
<rect x="770.84" y="227.65" width="12.6" height="55.35" fill="#808000"/>
<path d="M771.84,283 V228.65 H782.44 V283" fill="none" stroke="#ffff00" stroke-width="2"/>
<text x="0" y="0" transform="translate(780.74,296.7) rotate(-90)" font-family="'Liberation Sans', sans-serif" font-size="9.3" fill="#505050" text-anchor="middle">12B</text>
<rect x="788.20" y="218.89" width="12.6" height="64.11" fill="#808000"/>
<path d="M789.20,283 V219.89 H799.80 V283" fill="none" stroke="#ffff00" stroke-width="2"/>
<text x="0" y="0" transform="translate(798.10,296.7) rotate(-90)" font-family="'Liberation Sans', sans-serif" font-size="9.3" fill="#505050" text-anchor="middle">12C</text>
<rect x="805.56" y="232.03" width="12.6" height="50.97" fill="#808000"/>
<path d="M806.56,283 V233.03 H817.16 V283" fill="none" stroke="#ffff00" stroke-width="2"/>
<text x="0" y="0" transform="translate(815.46,296.7) rotate(-90)" font-family="'Liberation Sans', sans-serif" font-size="9.3" fill="#505050" text-anchor="middle">12D</text>
<rect x="822.92" y="216.70" width="12.6" height="66.30" fill="#808000"/>
<path d="M823.92,283 V217.70 H834.52 V283" fill="none" stroke="#ffff00" stroke-width="2"/>
<text x="0" y="0" transform="translate(832.82,296.7) rotate(-90)" font-family="'Liberation Sans', sans-serif" font-size="9.3" fill="#505050" text-anchor="middle">13A</text>
<rect x="840.28" y="232.03" width="12.6" height="50.97" fill="#808000"/>
<path d="M841.28,283 V233.03 H851.88 V283" fill="none" stroke="#ffff00" stroke-width="2"/>
<text x="0" y="0" transform="translate(850.18,296.7) rotate(-90)" font-family="'Liberation Sans', sans-serif" font-size="9.3" fill="#505050" text-anchor="middle">13B</text>
<rect x="857.64" y="227.65" width="12.6" height="55.35" fill="#808000"/>
<path d="M858.64,283 V228.65 H869.24 V283" fill="none" stroke="#ffff00" stroke-width="2"/>
<text x="0" y="0" transform="translate(867.54,296.7) rotate(-90)" font-family="'Liberation Sans', sans-serif" font-size="9.3" fill="#505050" text-anchor="middle">13C</text>
<rect x="875.00" y="232.03" width="12.6" height="50.97" fill="#808000"/>
<path d="M876.00,283 V233.03 H886.60 V283" fill="none" stroke="#ffff00" stroke-width="2"/>
<text x="0" y="0" transform="translate(884.90,296.7) rotate(-90)" font-family="'Liberation Sans', sans-serif" font-size="9.3" fill="#505050" text-anchor="middle">13D</text>
<rect x="892.36" y="227.65" width="12.6" height="55.35" fill="#808000"/>
<path d="M893.36,283 V228.65 H903.96 V283" fill="none" stroke="#ffff00" stroke-width="2"/>
<text x="0" y="0" transform="translate(902.26,296.7) rotate(-90)" font-family="'Liberation Sans', sans-serif" font-size="9.3" fill="#505050" text-anchor="middle">13E</text>
<rect x="909.72" y="144.43" width="12.6" height="138.57" fill="#008000"/>
<path d="M910.72,283 V145.43 H921.32 V283" fill="none" stroke="#00ff00" stroke-width="2"/>
<text x="0" y="0" transform="translate(919.62,296.7) rotate(-90)" font-family="'Liberation Sans', sans-serif" font-size="9.3" fill="#505050" text-anchor="middle">13F</text>
<rect x="754.5" y="118.5" width="15" height="11.5" rx="0" fill="#ffff00" stroke="#e0e0e0" stroke-width="1" />
<text x="775" y="129" font-family="'Liberation Sans', sans-serif" font-size="11.35" font-weight="normal" fill="#ccc" text-anchor="start" >RF Level: -dBµV, Channel: -</text>
<path d="M265.7,315.5 H258.5 Q254.5,315.5 254.5,319.5 V556.5 Q254.5,560.5 258.5,560.5 H925.5 Q929.5,560.5 929.5,556.5 V319.5 Q929.5,315.5 925.5,315.5 H323.7" fill="none" stroke="#3d84cb"/>
<text x="269.7" y="317.5" font-family="'Liberation Sans', sans-serif" font-size="13" font-weight="normal" fill="#1010ff" text-anchor="start" >Services</text>
<text x="269.3" y="340.8" font-family="'Liberation Sans', sans-serif" font-size="12.2" font-weight="bold" fill="#222" text-anchor="start" >Valid</text>
<text x="334.9" y="340.8" font-family="'Liberation Sans', sans-serif" font-size="12.2" font-weight="bold" fill="#222" text-anchor="start" >Channel</text>
<text x="421.3" y="340.8" font-family="'Liberation Sans', sans-serif" font-size="12.2" font-weight="bold" fill="#222" text-anchor="start" >RF Level</text>
<text x="483.7" y="340.8" font-family="'Liberation Sans', sans-serif" font-size="12.2" font-weight="bold" fill="#222" text-anchor="start" >Name</text>
<text x="726.9" y="340.8" font-family="'Liberation Sans', sans-serif" font-size="12.2" font-weight="bold" fill="#222" text-anchor="start" >FIC Quality</text>
<text x="814.8" y="340.8" font-family="'Liberation Sans', sans-serif" font-size="12.2" font-weight="bold" fill="#222" text-anchor="start" >Services</text>
<rect x="262" y="344" width="631" height="1" rx="0" fill="#000" />
<clipPath id="tclip"><rect x="255" y="347" width="621" height="208"/></clipPath>
<g clip-path="url(#tclip)">
<rect x="306" y="349" width="1" height="20" rx="0" fill="#8a8a8a" />
<rect x="413" y="349" width="1" height="20" rx="0" fill="#8a8a8a" />
<rect x="480" y="349" width="1" height="20" rx="0" fill="#8a8a8a" />
<rect x="717" y="349" width="1" height="20" rx="0" fill="#8a8a8a" />
<rect x="804" y="349" width="1" height="20" rx="0" fill="#8a8a8a" />
<text x="0" y="0" transform="translate(358.9,364) scale(0.93,1)" font-family="'Liberation Sans', sans-serif" font-size="12.6" font-weight="normal" fill="#333" text-anchor="middle">5A - 174.928MHz</text>
<text x="0" y="0" transform="translate(445.8,364) scale(0.93,1)" font-family="'Liberation Sans', sans-serif" font-size="12.6" font-weight="normal" fill="#333" text-anchor="middle">40 dBµV</text>
<text x="0" y="0" transform="translate(760,364) scale(0.93,1)" font-family="'Liberation Sans', sans-serif" font-size="12.6" font-weight="normal" fill="#333" text-anchor="middle">0 %</text>
<text x="0" y="0" transform="translate(839.5,364) scale(0.93,1)" font-family="'Liberation Sans', sans-serif" font-size="12.6" font-weight="normal" fill="#333" text-anchor="middle">0</text>
<rect x="306" y="371" width="1" height="20" rx="0" fill="#8a8a8a" />
<rect x="413" y="371" width="1" height="20" rx="0" fill="#8a8a8a" />
<rect x="480" y="371" width="1" height="20" rx="0" fill="#8a8a8a" />
<rect x="717" y="371" width="1" height="20" rx="0" fill="#8a8a8a" />
<rect x="804" y="371" width="1" height="20" rx="0" fill="#8a8a8a" />
<text x="0" y="0" transform="translate(358.9,386) scale(0.93,1)" font-family="'Liberation Sans', sans-serif" font-size="12.6" font-weight="normal" fill="#333" text-anchor="middle">5B - 176.64MHz</text>
<text x="0" y="0" transform="translate(445.8,386) scale(0.93,1)" font-family="'Liberation Sans', sans-serif" font-size="12.6" font-weight="normal" fill="#333" text-anchor="middle">36 dBµV</text>
<text x="0" y="0" transform="translate(760,386) scale(0.93,1)" font-family="'Liberation Sans', sans-serif" font-size="12.6" font-weight="normal" fill="#333" text-anchor="middle">0 %</text>
<text x="0" y="0" transform="translate(839.5,386) scale(0.93,1)" font-family="'Liberation Sans', sans-serif" font-size="12.6" font-weight="normal" fill="#333" text-anchor="middle">0</text>
<rect x="306" y="393" width="1" height="20" rx="0" fill="#8a8a8a" />
<rect x="413" y="393" width="1" height="20" rx="0" fill="#8a8a8a" />
<rect x="480" y="393" width="1" height="20" rx="0" fill="#8a8a8a" />
<rect x="717" y="393" width="1" height="20" rx="0" fill="#8a8a8a" />
<rect x="804" y="393" width="1" height="20" rx="0" fill="#8a8a8a" />
<text x="0" y="0" transform="translate(358.9,408) scale(0.93,1)" font-family="'Liberation Sans', sans-serif" font-size="12.6" font-weight="normal" fill="#333" text-anchor="middle">5C - 178.352MHz</text>
<text x="0" y="0" transform="translate(445.8,408) scale(0.93,1)" font-family="'Liberation Sans', sans-serif" font-size="12.6" font-weight="normal" fill="#333" text-anchor="middle">32 dBµV</text>
<text x="0" y="0" transform="translate(760,408) scale(0.93,1)" font-family="'Liberation Sans', sans-serif" font-size="12.6" font-weight="normal" fill="#333" text-anchor="middle">0 %</text>
<text x="0" y="0" transform="translate(839.5,408) scale(0.93,1)" font-family="'Liberation Sans', sans-serif" font-size="12.6" font-weight="normal" fill="#333" text-anchor="middle">0</text>
<rect x="306" y="415" width="1" height="20" rx="0" fill="#8a8a8a" />
<rect x="413" y="415" width="1" height="20" rx="0" fill="#8a8a8a" />
<rect x="480" y="415" width="1" height="20" rx="0" fill="#8a8a8a" />
<rect x="717" y="415" width="1" height="20" rx="0" fill="#8a8a8a" />
<rect x="804" y="415" width="1" height="20" rx="0" fill="#8a8a8a" />
<text x="0" y="0" transform="translate(358.9,430) scale(0.93,1)" font-family="'Liberation Sans', sans-serif" font-size="12.6" font-weight="normal" fill="#333" text-anchor="middle">5D - 180.064MHz</text>
<text x="0" y="0" transform="translate(445.8,430) scale(0.93,1)" font-family="'Liberation Sans', sans-serif" font-size="12.6" font-weight="normal" fill="#333" text-anchor="middle">31 dBµV</text>
<text x="0" y="0" transform="translate(760,430) scale(0.93,1)" font-family="'Liberation Sans', sans-serif" font-size="12.6" font-weight="normal" fill="#333" text-anchor="middle">0 %</text>
<text x="0" y="0" transform="translate(839.5,430) scale(0.93,1)" font-family="'Liberation Sans', sans-serif" font-size="12.6" font-weight="normal" fill="#333" text-anchor="middle">0</text>
<rect x="306" y="437" width="1" height="20" rx="0" fill="#8a8a8a" />
<rect x="413" y="437" width="1" height="20" rx="0" fill="#8a8a8a" />
<rect x="480" y="437" width="1" height="20" rx="0" fill="#8a8a8a" />
<rect x="717" y="437" width="1" height="20" rx="0" fill="#8a8a8a" />
<rect x="804" y="437" width="1" height="20" rx="0" fill="#8a8a8a" />
<text x="0" y="0" transform="translate(358.9,452) scale(0.93,1)" font-family="'Liberation Sans', sans-serif" font-size="12.6" font-weight="normal" fill="#333" text-anchor="middle">6A - 181.936MHz</text>
<text x="0" y="0" transform="translate(445.8,452) scale(0.93,1)" font-family="'Liberation Sans', sans-serif" font-size="12.6" font-weight="normal" fill="#333" text-anchor="middle">31 dBµV</text>
<text x="0" y="0" transform="translate(760,452) scale(0.93,1)" font-family="'Liberation Sans', sans-serif" font-size="12.6" font-weight="normal" fill="#333" text-anchor="middle">0 %</text>
<text x="0" y="0" transform="translate(839.5,452) scale(0.93,1)" font-family="'Liberation Sans', sans-serif" font-size="12.6" font-weight="normal" fill="#333" text-anchor="middle">0</text>
<rect x="306" y="459" width="1" height="20" rx="0" fill="#8a8a8a" />
<rect x="413" y="459" width="1" height="20" rx="0" fill="#8a8a8a" />
<rect x="480" y="459" width="1" height="20" rx="0" fill="#8a8a8a" />
<rect x="717" y="459" width="1" height="20" rx="0" fill="#8a8a8a" />
<rect x="804" y="459" width="1" height="20" rx="0" fill="#8a8a8a" />
<text x="0" y="0" transform="translate(358.9,474) scale(0.93,1)" font-family="'Liberation Sans', sans-serif" font-size="12.6" font-weight="normal" fill="#333" text-anchor="middle">6B - 183.648MHz</text>
<text x="0" y="0" transform="translate(445.8,474) scale(0.93,1)" font-family="'Liberation Sans', sans-serif" font-size="12.6" font-weight="normal" fill="#333" text-anchor="middle">26 dBµV</text>
<text x="0" y="0" transform="translate(760,474) scale(0.93,1)" font-family="'Liberation Sans', sans-serif" font-size="12.6" font-weight="normal" fill="#333" text-anchor="middle">0 %</text>
<text x="0" y="0" transform="translate(839.5,474) scale(0.93,1)" font-family="'Liberation Sans', sans-serif" font-size="12.6" font-weight="normal" fill="#333" text-anchor="middle">0</text>
<rect x="306" y="481" width="1" height="20" rx="0" fill="#8a8a8a" />
<rect x="413" y="481" width="1" height="20" rx="0" fill="#8a8a8a" />
<rect x="480" y="481" width="1" height="20" rx="0" fill="#8a8a8a" />
<rect x="717" y="481" width="1" height="20" rx="0" fill="#8a8a8a" />
<rect x="804" y="481" width="1" height="20" rx="0" fill="#8a8a8a" />
<text x="0" y="0" transform="translate(358.9,496) scale(0.93,1)" font-family="'Liberation Sans', sans-serif" font-size="12.6" font-weight="normal" fill="#333" text-anchor="middle">6C - 185.36MHz</text>
<text x="0" y="0" transform="translate(445.8,496) scale(0.93,1)" font-family="'Liberation Sans', sans-serif" font-size="12.6" font-weight="normal" fill="#333" text-anchor="middle">25 dBµV</text>
<text x="0" y="0" transform="translate(760,496) scale(0.93,1)" font-family="'Liberation Sans', sans-serif" font-size="12.6" font-weight="normal" fill="#333" text-anchor="middle">0 %</text>
<text x="0" y="0" transform="translate(839.5,496) scale(0.93,1)" font-family="'Liberation Sans', sans-serif" font-size="12.6" font-weight="normal" fill="#333" text-anchor="middle">0</text>
<rect x="306" y="503" width="1" height="20" rx="0" fill="#8a8a8a" />
<rect x="413" y="503" width="1" height="20" rx="0" fill="#8a8a8a" />
<rect x="480" y="503" width="1" height="20" rx="0" fill="#8a8a8a" />
<rect x="717" y="503" width="1" height="20" rx="0" fill="#8a8a8a" />
<rect x="804" y="503" width="1" height="20" rx="0" fill="#8a8a8a" />
<text x="0" y="0" transform="translate(358.9,518) scale(0.93,1)" font-family="'Liberation Sans', sans-serif" font-size="12.6" font-weight="normal" fill="#333" text-anchor="middle">6D - 187.072MHz</text>
<text x="0" y="0" transform="translate(445.8,518) scale(0.93,1)" font-family="'Liberation Sans', sans-serif" font-size="12.6" font-weight="normal" fill="#333" text-anchor="middle">31 dBµV</text>
<text x="0" y="0" transform="translate(760,518) scale(0.93,1)" font-family="'Liberation Sans', sans-serif" font-size="12.6" font-weight="normal" fill="#333" text-anchor="middle">0 %</text>
<text x="0" y="0" transform="translate(839.5,518) scale(0.93,1)" font-family="'Liberation Sans', sans-serif" font-size="12.6" font-weight="normal" fill="#333" text-anchor="middle">0</text>
<rect x="306" y="525" width="1" height="20" rx="0" fill="#8a8a8a" />
<rect x="413" y="525" width="1" height="20" rx="0" fill="#8a8a8a" />
<rect x="480" y="525" width="1" height="20" rx="0" fill="#8a8a8a" />
<rect x="717" y="525" width="1" height="20" rx="0" fill="#8a8a8a" />
<rect x="804" y="525" width="1" height="20" rx="0" fill="#8a8a8a" />
<text x="0" y="0" transform="translate(358.9,540) scale(0.93,1)" font-family="'Liberation Sans', sans-serif" font-size="12.6" font-weight="normal" fill="#333" text-anchor="middle">7A - 188.928MHz</text>
<text x="0" y="0" transform="translate(445.8,540) scale(0.93,1)" font-family="'Liberation Sans', sans-serif" font-size="12.6" font-weight="normal" fill="#333" text-anchor="middle">21 dBµV</text>
<text x="0" y="0" transform="translate(760,540) scale(0.93,1)" font-family="'Liberation Sans', sans-serif" font-size="12.6" font-weight="normal" fill="#333" text-anchor="middle">0 %</text>
<text x="0" y="0" transform="translate(839.5,540) scale(0.93,1)" font-family="'Liberation Sans', sans-serif" font-size="12.6" font-weight="normal" fill="#333" text-anchor="middle">0</text>
<rect x="306" y="547" width="1" height="20" rx="0" fill="#8a8a8a" />
<rect x="413" y="547" width="1" height="20" rx="0" fill="#8a8a8a" />
<rect x="480" y="547" width="1" height="20" rx="0" fill="#8a8a8a" />
<rect x="717" y="547" width="1" height="20" rx="0" fill="#8a8a8a" />
<rect x="804" y="547" width="1" height="20" rx="0" fill="#8a8a8a" />
<text x="0" y="0" transform="translate(358.9,562) scale(0.93,1)" font-family="'Liberation Sans', sans-serif" font-size="12.6" font-weight="normal" fill="#333" text-anchor="middle">7B - 190.64MHz</text>
<text x="0" y="0" transform="translate(445.8,562) scale(0.93,1)" font-family="'Liberation Sans', sans-serif" font-size="12.6" font-weight="normal" fill="#333" text-anchor="middle">26 dBµV</text>
<text x="0" y="0" transform="translate(760,562) scale(0.93,1)" font-family="'Liberation Sans', sans-serif" font-size="12.6" font-weight="normal" fill="#333" text-anchor="middle">0 %</text>
<text x="0" y="0" transform="translate(839.5,562) scale(0.93,1)" font-family="'Liberation Sans', sans-serif" font-size="12.6" font-weight="normal" fill="#333" text-anchor="middle">0</text>
</g>
<rect x="876" y="347" width="17" height="208" rx="0" fill="#f0f0f0" />
<rect x="878" y="364" width="13" height="43" rx="0" fill="#c1c1c1" />
<path d="M881,358.3 H888.2 L884.6,353.9 Z" fill="#a3a3a3"/>
<path d="M881,543.9 H888.2 L884.6,548.3 Z" fill="#505050"/>
<path d="M266.1,578.5 H259.5 Q255.5,578.5 255.5,582.5 V622.5 Q255.5,626.5 259.5,626.5 H925.5 Q929.5,626.5 929.5,622.5 V582.5 Q929.5,578.5 925.5,578.5 H333.8" fill="none" stroke="#3d84cb"/>
<text x="270.1" y="580.8" font-family="'Liberation Sans', sans-serif" font-size="13" font-weight="normal" fill="#1010ff" text-anchor="start" >BandScan</text>
<text x="263" y="606.8" font-family="'Liberation Sans', sans-serif" font-size="13" font-weight="normal" fill="#000" text-anchor="start" >Range:</text>
<rect x="315.5" y="592.5" width="129" height="21" rx="4" fill="url(#gbtn)" stroke="#7f7f7f" stroke-width="1" />
<text x="374.5" y="607.3" font-family="'Liberation Sans', sans-serif" font-size="13.8" font-weight="normal" fill="#000" text-anchor="middle" >5A - 174.928</text>
<path d="M433.5,600.8 H441 L437.25,605.6 Z" fill="#000"/>
<text x="456.5" y="606" font-family="'Liberation Sans', sans-serif" font-size="13" font-weight="normal" fill="#000" text-anchor="middle" >-</text>
<rect x="468.5" y="592.5" width="129" height="21" rx="4" fill="url(#gbtn)" stroke="#7f7f7f" stroke-width="1" />
<text x="527" y="607.3" font-family="'Liberation Sans', sans-serif" font-size="13.8" font-weight="normal" fill="#000" text-anchor="middle" >13F - 239.200</text>
<path d="M586,600.8 H593.5 L589.75,605.6 Z" fill="#000"/>
<rect x="615.5" y="595.5" width="12" height="11" rx="2" fill="#fff" stroke="#555" stroke-width="1" />
<text x="631.4" y="606.7" font-family="'Liberation Sans', sans-serif" font-size="14" font-weight="normal" fill="#000" text-anchor="start" >Show &quot;Valid&quot; only</text>
<rect x="752.5" y="591.5" width="79" height="21" rx="4" fill="url(#gbtn)" stroke="#7f7f7f" stroke-width="1" />
<text x="792.0" y="606.3" font-family="'Liberation Sans', sans-serif" font-size="13.5" font-weight="normal" fill="#000" text-anchor="middle" >Start</text>
<rect x="842.5" y="591.5" width="79" height="21" rx="4" fill="url(#gbtn)" stroke="#7f7f7f" stroke-width="1" />
<text x="882.0" y="606.3" font-family="'Liberation Sans', sans-serif" font-size="13.5" font-weight="normal" fill="#000" text-anchor="middle" >Stop</text>
<rect x="944.5" y="102.5" width="86" height="27" rx="4.5" fill="#e6e6e6" stroke="#4a8bd0" stroke-width="1" />
<text x="987.5" y="121.0" font-family="'Liberation Sans', sans-serif" font-size="14" font-weight="normal" fill="#0000ff" text-anchor="middle" textLength="41.6" lengthAdjust="spacingAndGlyphs">Logout</text>
<rect x="944.5" y="236.5" width="86" height="25" rx="4.5" fill="#e6e6e6" stroke="#4a8bd0" stroke-width="1" />
<text x="987.5" y="254.0" font-family="'Liberation Sans', sans-serif" font-size="14" font-weight="normal" fill="#0000ff" text-anchor="middle" textLength="28" lengthAdjust="spacingAndGlyphs">Main</text>
<rect x="944.5" y="266.5" width="86" height="25" rx="4.5" fill="#e6e6e6" stroke="#4a8bd0" stroke-width="1" />
<text x="987.5" y="284.0" font-family="'Liberation Sans', sans-serif" font-size="14" font-weight="normal" fill="#0000ff" text-anchor="middle" textLength="65.9" lengthAdjust="spacingAndGlyphs">DAB/DAB+</text>
<rect x="944.5" y="296.5" width="86" height="25" rx="4.5" fill="#e6e6e6" stroke="#4a8bd0" stroke-width="1" />
<text x="987.5" y="314.0" font-family="'Liberation Sans', sans-serif" font-size="14" font-weight="normal" fill="#0000ff" text-anchor="middle" textLength="57.4" lengthAdjust="spacingAndGlyphs">Loudness</text>
<rect x="944.5" y="356.5" width="86" height="25" rx="4.5" fill="#e6e6e6" stroke="#4a8bd0" stroke-width="1" />
<text x="987.5" y="374.0" font-family="'Liberation Sans', sans-serif" font-size="14" font-weight="normal" fill="#0000ff" text-anchor="middle" textLength="38.5" lengthAdjust="spacingAndGlyphs">Status</text>
<rect x="944.5" y="386.5" width="86" height="25" rx="4.5" fill="#e6e6e6" stroke="#4a8bd0" stroke-width="1" />
<text x="987.5" y="404.0" font-family="'Liberation Sans', sans-serif" font-size="14" font-weight="normal" fill="#0000ff" text-anchor="middle" textLength="22.5" lengthAdjust="spacingAndGlyphs">Log</text>
<rect x="944.5" y="416.5" width="86" height="25" rx="4.5" fill="#e6e6e6" stroke="#4a8bd0" stroke-width="1" />
<text x="987.5" y="434.0" font-family="'Liberation Sans', sans-serif" font-size="14" font-weight="normal" fill="#0000ff" text-anchor="middle" textLength="48.5" lengthAdjust="spacingAndGlyphs">Settings</text>
<path d="M940,326.5 H1025 Q1030.5,326.5 1030.5,332 V347 Q1030.5,352.5 1025,352.5 H940" fill="#fff" stroke="#3d84cb"/>
<rect x="938" y="327" width="4" height="25" rx="0" fill="#fff" />
<text x="985.3" y="343.6" font-family="'Liberation Sans', sans-serif" font-size="14" font-weight="bold" fill="#1010ee" text-anchor="middle" >BandScan</text>
<rect x="944.5" y="605.5" width="86" height="27" rx="4" fill="url(#ggreen)" stroke="#666" stroke-width="1" />
<g fill="#000"><path d="M975,615 H979 L985,610 V614.5 L986.7,618.4 L985,622.3 V627 L979,621.7 H975 Z"/>
<path d="M988.6,614.3 Q991.6,618.4 988.6,622.5" fill="none" stroke="#000" stroke-width="1.8"/><path d="M991.8,612 Q996,618.4 991.8,624.8" fill="none" stroke="#000" stroke-width="1.8"/><path d="M995.3,610.3 Q1000.2,618.4 995.3,626.6" fill="none" stroke="#000" stroke-width="1.8"/></g>
</svg>
</body></html>
